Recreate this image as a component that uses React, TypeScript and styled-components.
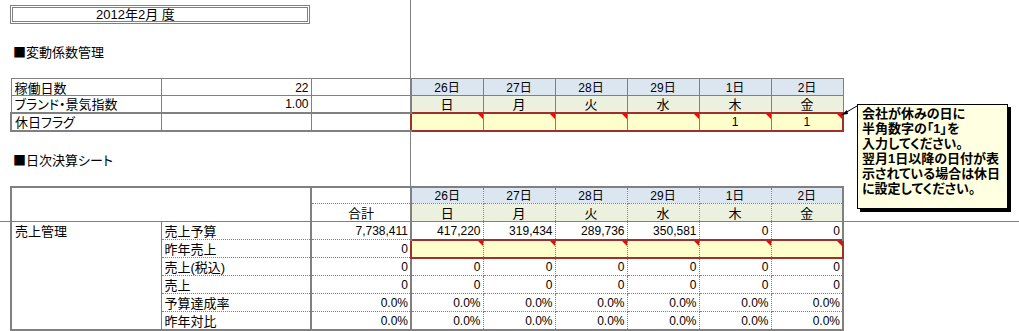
import styled, { createGlobalStyle } from "styled-components";

const GRID = "#808080";
const RED = "#a03030";
const BLUE = "#dce6f1";
const BEIGE = "#ebf1de";
const YELLOW = "#ffffcc";

const thin = `1px solid ${GRID}`;
const thick = `2px solid ${GRID}`;
const dot = `1px dotted ${GRID}`;
const redLine = `2px solid ${RED}`;

const GlobalStyle = createGlobalStyle`
  html, body { margin: 0; padding: 0; background: #fff; }
  body {
    font-family: "Liberation Sans", "Noto Sans CJK JP", sans-serif;
    font-size: 13px;
    color: #000;
    font-feature-settings: "palt";
  }
`;

const Sheet = styled.div`
  position: relative;
  width: 1019px;
  height: 331px;
  overflow: hidden;
  box-sizing: border-box;
  padding: 5px 0 0 10px;
`;

const FreezeV = styled.div`
  position: absolute;
  left: 410px;
  top: 0;
  bottom: 0;
  width: 1px;
  background: ${GRID};
`;

const FreezeH = styled.div`
  position: absolute;
  left: 0;
  right: 0;
  top: 221px;
  height: 1px;
  background: ${GRID};
`;

const TitleBox = styled.div`
  position: relative;
  box-sizing: border-box;
  width: 300px;
  height: 19px;
  border: 3px double ${GRID};
  background: #fff;
  padding-left: 83px;
  font-size: 13px;
  line-height: 13px;
`;

const SectionHeading = styled.div<{ $gap: number }>`
  position: relative;
  margin-top: ${(p) => p.$gap}px;
  padding-left: 3px;
  height: 16px;
  line-height: 16px;
  font-family: "Noto Sans CJK JP", sans-serif;
  font-size: 13px;
`;

const Grid = styled.table<{ $gap: number }>`
  position: relative;
  margin-top: ${(p) => p.$gap}px;
  border-collapse: collapse;
  table-layout: fixed;
  width: 832px;
`;

type Edges = { $t?: string; $r?: string; $b?: string; $l?: string; $h: number };

const Cell = styled.td<Edges>`
  box-sizing: border-box;
  height: ${(p) => p.$h}px;
  padding: 2px 3px 0;
  line-height: 11px;
  vertical-align: middle;
  white-space: nowrap;
  overflow: hidden;
  border-top: ${(p) => p.$t ?? "none"};
  border-right: ${(p) => p.$r ?? "none"};
  border-bottom: ${(p) => p.$b ?? "none"};
  border-left: ${(p) => p.$l ?? "none"};
`;

const LabelCell = styled(Cell)`
  text-align: left;
  font-size: 13px;
`;

const GroupCell = styled(Cell)`
  vertical-align: top;
  text-align: left;
  font-size: 13px;
  padding-top: 4px;
`;

const NumCell = styled(Cell)`
  text-align: right;
  font-size: 12px;
  padding-right: 2px;
`;

const HeadCell = styled(Cell)<{ $tone: "day" | "week" | "plain" }>`
  text-align: center;
  font-size: ${(p) => (p.$tone === "day" ? 12 : 13)}px;
  background: ${(p) => (p.$tone === "day" ? BLUE : p.$tone === "week" ? BEIGE : "transparent")};
`;

const FlagCell = styled(Cell)`
  position: relative;
  text-align: center;
  font-size: 12px;
  background: ${YELLOW};

  &::after {
    content: "";
    position: absolute;
    top: 0;
    right: 0;
    border-top: 5px solid #ff0000;
    border-left: 5px solid transparent;
  }
`;

const Callout = styled.div`
  position: absolute;
  z-index: 2;
  left: 857px;
  top: 104px;
  box-sizing: border-box;
  width: 151px;
  height: 105px;
  padding: 1px 0 0 4px;
  background: #ffffe1;
  border: 1px solid #000;
  box-shadow: 3px 3px 0 #000;
  font-weight: bold;
  font-size: 13px;
  line-height: 15px;
`;

const Pointer = styled.svg`
  position: absolute;
  z-index: 2;
  left: 838px;
  top: 102px;
`;

const days = ["26日", "27日", "28日", "29日", "1日", "2日"];
const weekdays = ["日", "月", "火", "水", "木", "金"];
const holidayFlags = ["", "", "", "", "1", "1"];

const dailyRows = [
  { label: "売上予算", sum: "7,738,411", values: ["417,220", "319,434", "289,736", "350,581", "0", "0"] },
  { label: "昨年売上", sum: "0", values: null },
  { label: "売上(税込)", sum: "0", values: ["0", "0", "0", "0", "0", "0"] },
  { label: "売上", sum: "0", values: ["0", "0", "0", "0", "0", "0"] },
  { label: "予算達成率", sum: "0.0%", values: ["0.0%", "0.0%", "0.0%", "0.0%", "0.0%", "0.0%"] },
  { label: "昨年対比", sum: "0.0%", values: ["0.0%", "0.0%", "0.0%", "0.0%", "0.0%", "0.0%"] },
];

function Cols() {
  return (
    <colgroup>
      <col style={{ width: 150 }} />
      <col style={{ width: 150 }} />
      <col style={{ width: 100 }} />
      {days.map((d) => (
        <col key={d} style={{ width: 72 }} />
      ))}
    </colgroup>
  );
}

function CoefficientTable() {
  return (
    <Grid $gap={18}>
      <Cols />
      <tbody>
        <tr>
          <LabelCell $h={17} $t={thin} $r={thin} $b={thin} $l={thin}>稼働日数</LabelCell>
          <NumCell $h={17} $t={thin} $r={thin} $b={thin}>22</NumCell>
          <Cell $h={17} $t={thin} $r={thin} $b={thin} />
          {days.map((d) => (
            <HeadCell key={d} $tone="day" $h={17} $t={thin} $r={thin} $b={thin}>{d}</HeadCell>
          ))}
        </tr>
        <tr>
          <LabelCell $h={17} $r={thin} $b={thin} $l={thin}>ブランド・景気指数</LabelCell>
          <NumCell $h={17} $r={thin} $b={thin}>1.00</NumCell>
          <Cell $h={17} $r={thin} $b={thin} />
          {weekdays.map((w) => (
            <HeadCell key={w} $tone="week" $h={17} $r={thin} $b={thin}>{w}</HeadCell>
          ))}
        </tr>
        <tr>
          <LabelCell $h={18} $t={thick} $r={thin} $b={thick} $l={thick}>休日フラグ</LabelCell>
          <Cell $h={18} $t={thick} $r={thin} $b={thick} />
          <Cell $h={18} $t={thick} $b={thick} />
          {holidayFlags.map((f, i) => (
            <FlagCell
              key={i}
              $h={18}
              $t={redLine}
              $b={redLine}
              $l={i === 0 ? redLine : thin}
              $r={i === 5 ? redLine : thin}
            >
              {f}
            </FlagCell>
          ))}
        </tr>
      </tbody>
    </Grid>
  );
}

function DailyTable() {
  return (
    <Grid $gap={18}>
      <Cols />
      <tbody>
        <tr>
          <Cell colSpan={2} rowSpan={2} $h={17} $t={thick} $l={thick} $r={thick} $b={thin} />
          <HeadCell $tone="plain" $h={17} $t={thick} $r={thick} $b={dot} />
          {days.map((d, i) => (
            <HeadCell key={d} $tone="day" $h={17} $t={thick} $b={dot} $r={i === 5 ? thick : dot}>{d}</HeadCell>
          ))}
        </tr>
        <tr>
          <HeadCell $tone="plain" $h={18} $r={thick} $b={thin}>合計</HeadCell>
          {weekdays.map((w, i) => (
            <HeadCell key={w} $tone="week" $h={18} $b={thin} $r={i === 5 ? thick : dot}>{w}</HeadCell>
          ))}
        </tr>
        {dailyRows.map((row, r) => {
          const last = r === dailyRows.length - 1;
          const bottom = last ? thick : dot;
          return (
            <tr key={row.label}>
              {r === 0 && (
                <GroupCell rowSpan={6} $h={18} $l={thick} $r={thin} $b={thick}>売上管理</GroupCell>
              )}
              <LabelCell $h={18} $r={thick} $b={bottom}>{row.label}</LabelCell>
              <NumCell $h={18} $r={row.values ? thick : undefined} $b={bottom}>{row.sum}</NumCell>
              {row.values
                ? row.values.map((v, i) => (
                    <NumCell key={i} $h={18} $b={bottom} $r={i === 5 ? thick : dot}>{v}</NumCell>
                  ))
                : days.map((d, i) => (
                    <FlagCell
                      key={d}
                      $h={18}
                      $t={redLine}
                      $b={redLine}
                      $l={i === 0 ? redLine : dot}
                      $r={i === 5 ? redLine : dot}
                    />
                  ))}
            </tr>
          );
        })}
      </tbody>
    </Grid>
  );
}

export default function App() {
  return (
    <>
      <GlobalStyle />
      <Sheet>
        <FreezeV />
        <FreezeH />
        <TitleBox>2012年2月 度</TitleBox>
        <SectionHeading $gap={20}>■変動係数管理</SectionHeading>
        <CoefficientTable />
        <SectionHeading $gap={20}>■日次決算シート</SectionHeading>
        <DailyTable />
        <Pointer width="22" height="16" viewBox="0 0 22 16">
          <line x1="19" y1="4" x2="7" y2="11" stroke="#000" strokeWidth="1" />
          <polygon points="3,13 9,8 10,12" fill="#000" />
        </Pointer>
        <Callout>
          会社が休みの日に<br />
          半角数字の「1」を<br />
          入力してください。<br />
          翌月1日以降の日付が表<br />
          示されている場合は休日<br />
          に設定してください。
        </Callout>
      </Sheet>
    </>
  );
}
